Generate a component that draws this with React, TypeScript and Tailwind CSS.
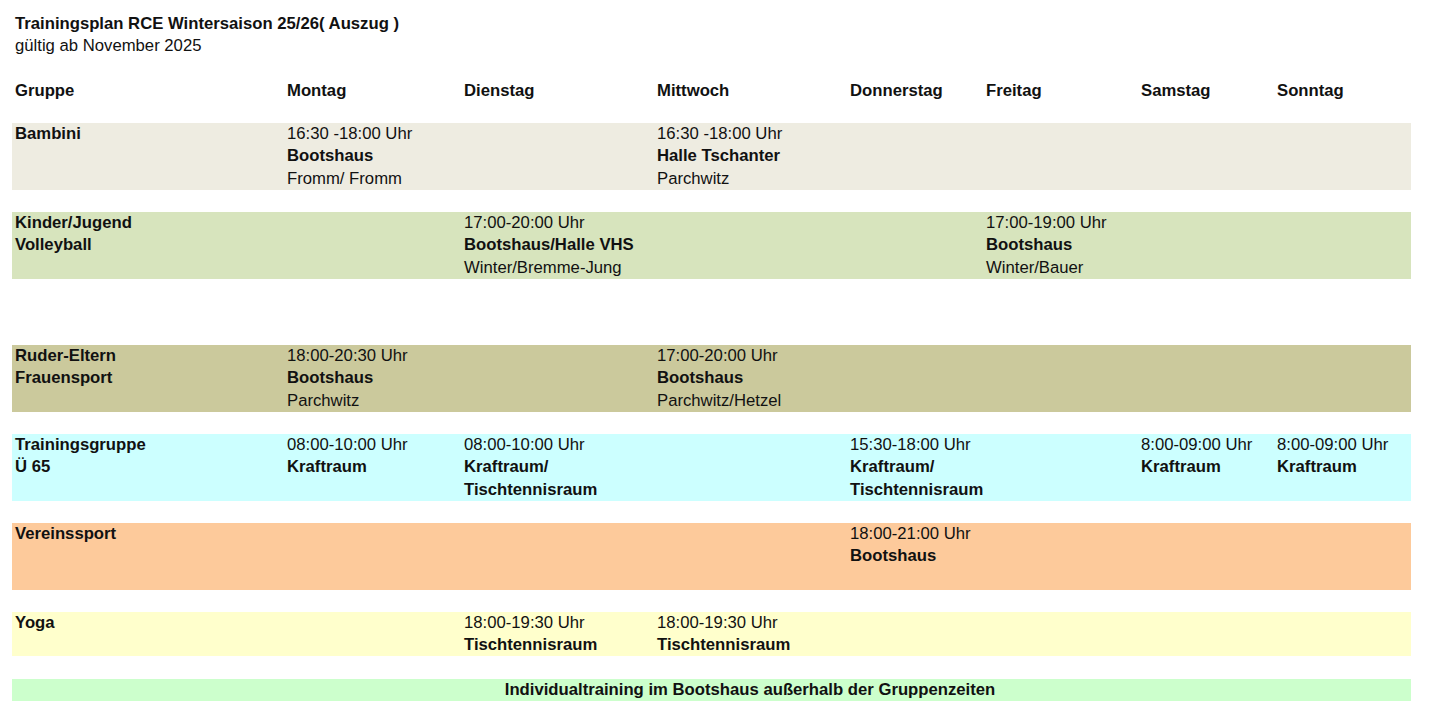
import React from 'react';

type Cell = { time?: string; place?: string[]; names?: string } | null;

type Row = {
  group: string[];
  bg: string;
  height: string;
  cells: Cell[];
  gapBefore: string;
};

const days = ['Montag', 'Dienstag', 'Mittwoch', 'Donnerstag', 'Freitag', 'Samstag', 'Sonntag'];

const rows: Row[] = [
  {
    group: ['Bambini'],
    bg: 'bg-[#eeece1]',
    height: 'h-[67px]',
    gapBefore: 'mt-[22px]',
    cells: [
      { time: '16:30 -18:00 Uhr', place: ['Bootshaus'], names: 'Fromm/ Fromm' },
      null,
      { time: '16:30 -18:00 Uhr', place: ['Halle Tschanter'], names: 'Parchwitz' },
      null,
      null,
      null,
      null,
    ],
  },
  {
    group: ['Kinder/Jugend', 'Volleyball'],
    bg: 'bg-[#d7e4bd]',
    height: 'h-[67px]',
    gapBefore: 'mt-[22px]',
    cells: [
      null,
      { time: '17:00-20:00 Uhr', place: ['Bootshaus/Halle VHS'], names: 'Winter/Bremme-Jung' },
      null,
      null,
      { time: '17:00-19:00 Uhr', place: ['Bootshaus'], names: 'Winter/Bauer' },
      null,
      null,
    ],
  },
  {
    group: ['Ruder-Eltern', 'Frauensport'],
    bg: 'bg-[#cbc99c]',
    height: 'h-[67px]',
    gapBefore: 'mt-[66px]',
    cells: [
      { time: '18:00-20:30 Uhr', place: ['Bootshaus'], names: 'Parchwitz' },
      null,
      { time: '17:00-20:00 Uhr', place: ['Bootshaus'], names: 'Parchwitz/Hetzel' },
      null,
      null,
      null,
      null,
    ],
  },
  {
    group: ['Trainingsgruppe', 'Ü 65'],
    bg: 'bg-[#ccffff]',
    height: 'h-[67px]',
    gapBefore: 'mt-[22px]',
    cells: [
      { time: '08:00-10:00 Uhr', place: ['Kraftraum'] },
      { time: '08:00-10:00 Uhr', place: ['Kraftraum/', 'Tischtennisraum'] },
      null,
      { time: '15:30-18:00 Uhr', place: ['Kraftraum/', 'Tischtennisraum'] },
      null,
      { time: '8:00-09:00 Uhr', place: ['Kraftraum'] },
      { time: '8:00-09:00 Uhr', place: ['Kraftraum'] },
    ],
  },
  {
    group: ['Vereinssport'],
    bg: 'bg-[#fdca9b]',
    height: 'h-[67px]',
    gapBefore: 'mt-[22px]',
    cells: [
      null,
      null,
      null,
      { time: '18:00-21:00 Uhr', place: ['Bootshaus'] },
      null,
      null,
      null,
    ],
  },
  {
    group: ['Yoga'],
    bg: 'bg-[#ffffcc]',
    height: 'h-[44px]',
    gapBefore: 'mt-[22px]',
    cells: [
      null,
      { time: '18:00-19:30 Uhr', place: ['Tischtennisraum'] },
      { time: '18:00-19:30 Uhr', place: ['Tischtennisraum'] },
      null,
      null,
      null,
      null,
    ],
  },
];

const gridCols = 'grid grid-cols-[272px_177px_193px_193px_136px_155px_136px_137px]';

const App = () => {
  return (
    <div
      className="min-h-[722px] bg-white px-[12px] pt-[12px] text-[16.7px] leading-[22.4px] text-[#111]"
      style={{ fontFamily: '"Liberation Sans", Arial, sans-serif' }}
    >
      <div className="pl-[3px] pt-[1px]">
        <h1 className="font-bold">Trainingsplan RCE Wintersaison 25/26( Auszug )</h1>
        <p>gültig ab November 2025</p>
      </div>

      <div className={`${gridCols} mt-[21px] h-[22px] pt-[1px] font-bold`}>
        <div className="pl-[3px]">Gruppe</div>
        {days.map((d) => (
          <div key={d} className="pl-[3px]">
            {d}
          </div>
        ))}
      </div>

      {rows.map((row, i) => (
        <div key={i} className={`${gridCols} ${row.bg} ${row.gapBefore} ${row.height} w-[1399px]`}>
          <div className="pl-[3px] font-bold">
            {row.group.map((g) => (
              <div key={g}>{g}</div>
            ))}
          </div>
          {row.cells.map((c, j) => (
            <div key={j} className="pl-[3px] whitespace-nowrap">
              {c && (
                <>
                  {c.time && <div>{c.time}</div>}
                  {c.place?.map((p) => (
                    <div key={p} className="font-bold">
                      {p}
                    </div>
                  ))}
                  {c.names && <div>{c.names}</div>}
                </>
              )}
            </div>
          ))}
        </div>
      ))}

      <div className="mt-[23px] flex h-[22px] w-[1399px] items-center justify-center bg-[#ccffcc] pl-[77px] font-bold">
        Individualtraining im Bootshaus außerhalb der Gruppenzeiten
      </div>
    </div>
  );
};

export default App;
